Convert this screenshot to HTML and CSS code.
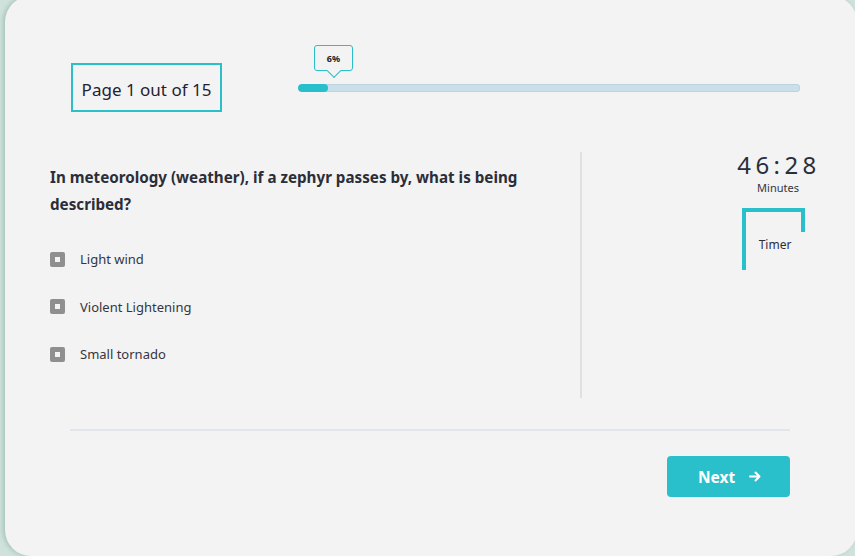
FILE: index.html
```html
<!DOCTYPE html>
<html lang="en">
<head>
<meta charset="utf-8">
<title>Quiz</title>
<link rel="stylesheet" href="styles.css">
</head>
<body>
<div class="card">
  <header class="top">
    <div class="page-box">Page 1 out of 15</div>
    <div class="progress">
      <div class="tip">6%</div>
      <div class="bar"><div class="fill" style="width:6%"></div></div>
    </div>
  </header>
  <main class="main">
    <section class="question">
      <h2 class="q-text">In meteorology (weather), if a zephyr passes by, what is being described?</h2>
      <ul class="options">
        <li class="option"><span class="check"></span>Light wind</li>
        <li class="option"><span class="check"></span>Violent Lightening</li>
        <li class="option"><span class="check"></span>Small tornado</li>
      </ul>
    </section>
    <div class="divider"></div>
    <aside class="timer">
      <div class="clock">46:28</div>
      <div class="unit">Minutes</div>
      <div class="bracket"><span>Timer</span></div>
    </aside>
  </main>
  <hr class="rule">
  <footer class="foot">
    <button class="next">Next <svg class="arrow" width="12" height="11" viewBox="0 0 12 11"><path d="M1 5.5H10.5M6.5 1.5L10.5 5.5L6.5 9.5" fill="none" stroke="#fff" stroke-width="2" stroke-linecap="round" stroke-linejoin="round"/></svg></button>
  </footer>
</div>
</body>
</html>
```
FILE: styles.css
```css
* { box-sizing: border-box; }
html, body { margin: 0; padding: 0; }
body {
  background: #cfe2db;
  width: 855px;
  height: 556px;
  overflow: hidden;
  font-family: "Noto Sans", "Open Sans", sans-serif;
  color: #2b2e39;
}
.card {
  margin: -4px 0 0 5px;
  width: 852px;
  height: 560px;
  background: #f3f3f3;
  border-radius: 26px;
  box-shadow: -2px 0 4px rgba(120,160,145,0.45);
  display: flex;
  flex-direction: column;
}
.top {
  display: flex;
  align-items: flex-start;
  padding: 49px 0 0 66px;
}
.page-box {
  margin-top: 18px;
  width: 151px;
  height: 49px;
  border: 2px solid #2bbfca;
  display: flex;
  align-items: center;
  justify-content: center;
  font-size: 17px;
  color: #1f2230;
  padding-top: 4px;
}
.progress {
  margin-left: 76px;
  width: 502px;
  display: flex;
  flex-direction: column;
}
.tip {
  position: relative;
  margin-left: 16px;
  width: 39px;
  height: 26px;
  border: 1.5px solid #2bbfca;
  border-radius: 3px;
  font-size: 9px;
  font-weight: 700;
  color: #222;
  display: flex;
  align-items: center;
  justify-content: center;
}
.tip::after {
  content: "";
  position: absolute;
  left: 14px;
  bottom: -6px;
  width: 9px;
  height: 9px;
  background: #f3f3f3;
  border-right: 1.5px solid #2bbfca;
  border-bottom: 1.5px solid #2bbfca;
  transform: rotate(45deg);
}
.bar {
  margin-top: 13px;
  height: 8px;
  border-radius: 4px;
  background: #c9e0ea;
  box-shadow: inset 0 0 0 1px #bed3dc;
  overflow: hidden;
}
.fill {
  height: 100%;
  background: #27bfcb;
  border-radius: 4px;
}
.main {
  margin-top: 40px;
  display: grid;
  grid-template-columns: 575px 2px 1fr;
  height: 246px;
}
.question { padding: 12px 0 0 45px; }
.q-text {
  margin: 0;
  font-size: 15.2px;
  font-weight: 700;
  line-height: 27px;
  color: #2b2e39;
  padding-right: 50px;
}
.options {
  list-style: none;
  margin: 31px 0 0;
  padding: 0;
}
.option {
  display: flex;
  align-items: center;
  height: 20px;
  margin-bottom: 27.5px;
  font-size: 13px;
  color: #333640;
}
.check {
  width: 15px;
  height: 15px;
  border-radius: 2px;
  background: #8f8f8f;
  margin-right: 15px;
  display: flex;
  align-items: center;
  justify-content: center;
}
.check::before {
  content: "";
  width: 5px;
  height: 5px;
  background: #f3f3f3;
}
.divider { background: #e0e0e0; }
.timer {
  padding-left: 117px;
  display: flex;
  flex-direction: column;
  align-items: center;
}
.clock {
  margin-top: -1px;
  font-size: 24px;
  letter-spacing: 4.4px;
  line-height: 28px;
  padding-left: 2px;
  color: #2b2e39;
}
.unit {
  margin-top: 2px;
  font-size: 11px;
  line-height: 14px;
  color: #333640;
}
.bracket {
  position: relative;
  margin-top: 13px;
  margin-left: -10px;
  width: 63px;
  height: 62px;
  border-top: 4px solid #29c0cb;
  border-left: 4px solid #29c0cb;
  display: flex;
  align-items: center;
  justify-content: center;
  font-size: 12px;
  color: #2b2e39;
}
.bracket span { margin-top: 6px; }
.bracket::after {
  content: "";
  position: absolute;
  right: 0;
  top: 0;
  width: 4px;
  height: 20px;
  background: #29c0cb;
}
.rule {
  margin: 31px 0 0 65px;
  width: 720px;
  height: 2px;
  border: 0;
  background: #e2e5e9;
}
.foot {
  display: flex;
  justify-content: flex-end;
  padding-right: 67px;
  margin-top: 25px;
}
.next {
  width: 123px;
  height: 41px;
  border: 0;
  border-radius: 4px;
  background: #29c0cb;
  color: #fff;
  font-family: "Noto Sans", "Open Sans", sans-serif;
  font-weight: 700;
  font-size: 15.5px;
  display: flex;
  align-items: center;
  justify-content: center;
  gap: 14px;
  padding: 0 0 0 2px;
}
.arrow { display: block; }
```
